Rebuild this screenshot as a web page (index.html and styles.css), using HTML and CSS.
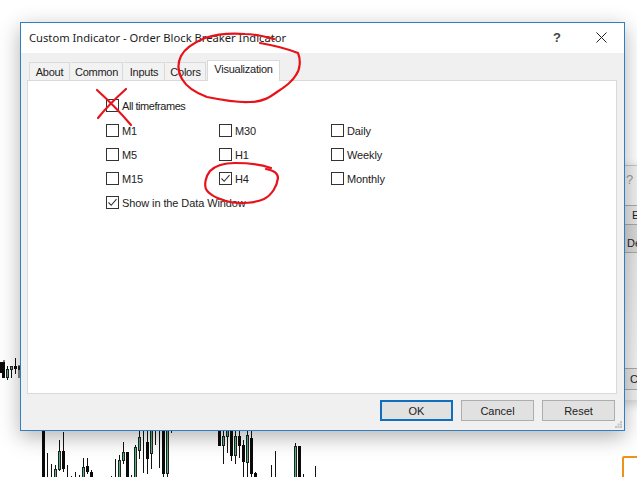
FILE: index.html
```html
<!DOCTYPE html>
<html lang="en">
<head>
<meta charset="utf-8">
<title>Custom Indicator - Order Block Breaker Indicator</title>
<link rel="stylesheet" href="styles.css">
</head>
<body>
<div class="desktop">
  <svg class="chart" width="637" height="477" viewBox="0 0 637 477">
    <g class="wick">
      <path d="M4 360V378M7.5 366V380M11.5 366V378M15.5 358V374M19 365V378"/>
      <path d="M47.5 453V477M51.5 464V477M55.5 465V477M59.5 440V471M63.5 432V472M67.5 465V477M71.500 476V477M75.5 472V477M79.5 475V477M83.5 458V477M87.5 458V474M91.5 470V477M111.5 476V477M115.5 459V477M119.5 455V477M123.5 442V464M131.5 475V477M135.5 445V477M139.5 430V459M143.5 431V473M147.5 431V474M151.5 431V469M155.5 431V445M159.5 431V468M163.5 431V477M167.5 431V477M171.5 431V433"/>
      <path d="M223.5 431V464M227.5 431V453M231.5 431V461M235.5 431V464M239.5 431V458M243.5 440V477M247.5 431V477M251.5 431V477M255.5 472V477M271.5 465V477M275.5 451V477M295.5 443V477M303.5 474V477M315.5 466V477"/>
    </g>
    <g class="bear">
      <rect x="0" y="362" width="2" height="11"/><rect x="2" y="362" width="3" height="16"/><rect x="14" y="366" width="3" height="3"/>
      <rect x="42" y="431" width="3" height="46"/><rect x="62" y="451" width="3" height="18"/><rect x="86" y="466" width="3" height="6"/><rect x="90" y="472" width="3" height="5"/><rect x="126" y="452" width="3" height="25"/><rect x="146" y="442" width="3" height="17"/><rect x="162" y="431" width="3" height="43"/>
      <rect x="218" y="431" width="3" height="15"/><rect x="230" y="431" width="3" height="25"/><rect x="238" y="436" width="3" height="10"/><rect x="242" y="445" width="3" height="17"/><rect x="250" y="438" width="3" height="36"/><rect x="254" y="473" width="3" height="4"/><rect x="298" y="446" width="3" height="31"/>
    </g>
    <g class="bull">
      <rect x="6.500" y="369.500" width="2" height="8"/><rect x="10.500" y="366.500" width="2" height="3"/><rect x="18.500" y="366.500" width="1" height="3"/>
      <rect x="54.500" y="469.500" width="2" height="8"/><rect x="58.500" y="451.500" width="2" height="18"/><rect x="82.500" y="467.500" width="2" height="10"/><rect x="118.500" y="460.500" width="2" height="17"/><rect x="122.500" y="452.500" width="2" height="8"/><rect x="134.500" y="447.500" width="2" height="30"/><rect x="138.500" y="437.500" width="2" height="13"/><rect x="150.500" y="430.500" width="2" height="23"/><rect x="166.500" y="430.500" width="2" height="43"/>
      <rect x="222.500" y="436.500" width="2" height="9"/><rect x="226.500" y="430.500" width="2" height="6"/><rect x="234.500" y="436.500" width="2" height="19"/><rect x="246.500" y="435.500" width="2" height="27"/><rect x="294.500" y="446.500" width="2" height="31"/>
    </g>
  </svg>

  <aside class="back-window">
    <div class="back-help">?</div>
    <div class="back-btn back-btn-e">E</div>
    <div class="back-btn back-btn-de">De</div>
    <div class="back-fill"></div>
    <div class="back-btn back-btn-cl">Cl</div>
  </aside>

  <div class="orange-box"></div>

  <section class="dialog">
    <header class="titlebar">
      <span class="title">Custom Indicator - Order Block Breaker Indicator</span>
      <span class="help">?</span>
      <svg class="close" width="11" height="11" viewBox="0 0 11 11"><path d="M.5.500 10.500 10.500M10.500.500.500 10.500"/></svg>
    </header>

    <nav class="tabs">
      <span class="tab tab-about">About</span>
      <span class="tab tab-common">Common</span>
      <span class="tab tab-inputs">Inputs</span>
      <span class="tab tab-colors">Colors</span>
      <span class="tab tab-active">Visualization</span>
    </nav>

    <main class="panel">
      <label class="check check-all"><span class="box"></span>All timeframes</label>
      <div class="grid">
        <label class="check"><span class="box"></span>M1</label>
        <label class="check"><span class="box"></span>M30</label>
        <label class="check"><span class="box"></span>Daily</label>
        <label class="check"><span class="box"></span>M5</label>
        <label class="check"><span class="box"></span>H1</label>
        <label class="check"><span class="box"></span>Weekly</label>
        <label class="check"><span class="box"></span>M15</label>
        <label class="check"><span class="box"><svg class="tick" width="11" height="11" viewBox="0 0 11 11"><path d="M1.500 5.500 4.200 8.300 9.500 2.200"/></svg></span>H4</label>
        <label class="check"><span class="box"></span>Monthly</label>
      </div>
      <label class="check check-data"><span class="box"><svg class="tick" width="11" height="11" viewBox="0 0 11 11"><path d="M1.500 5.500 4.200 8.300 9.500 2.200"/></svg></span>Show in the Data Window</label>
    </main>

    <footer class="footer">
      <span class="btn btn-default">OK</span>
      <span class="btn">Cancel</span>
      <span class="btn">Reset</span>
      <svg class="grip" width="7" height="7" viewBox="0 0 7 7"><path d="M5 0h2v2H5zM2.500 2.500h2v2h-2zM5 2.500h2v2H5zM0 5h2v2H0zM2.500 5h2v2h-2zM5 5h2v2H5z"/></svg>
    </footer>
  </section>

  <svg class="ink" width="637" height="477" viewBox="0 0 637 477">
    <path d="M260 43C272 45 285 48 298 53C301 60 300 70 296 75C292 82 285 87 277 92C270 97 263 102 250 102C238 103 222 100 207 97C196 93 186 86 182 79C177 70 178 62 181 56C185 48 193 43 205 38C217 34 232 33 245 34C256 34 266 37 274 39"/>
    <path d="M97 90C108 100 120 112 131 125M126 89C116 98 106 108 98 118"/>
    <path d="M271 168C262 165 248 163 235 163C224 163 215 166 210 171C206 176 204 184 206 189C209 195 218 199 230 202C241 204 255 203 264 199C272 195 277 186 278 178C278 172 272 170 266 169"/>
  </svg>
</div>
</body>
</html>
```
FILE: styles.css
```css
* { box-sizing: border-box; }
html, body { margin: 0; padding: 0; background: #fff; }
body { font-family: "Liberation Sans", Arial, sans-serif; font-size: 11px; color: #222; }

.desktop { position: relative; width: 637px; height: 477px; overflow: hidden; background: #fff; }

.chart { position: absolute; left: 0; top: 0; }
.wick path { fill: none; stroke: #111; stroke-width: 1; }
.bear rect { fill: #0a0a0a; }
.bull rect { fill: #4fb583; stroke: #222; stroke-width: 1; }

.back-window {
  position: absolute; left: 612px; top: 165px; width: 40px; height: 235px;
  display: flex; flex-direction: column; padding-left: 13px;
  background: #f0f0f0; border-top: 1px solid #c4c4c4; box-shadow: 0 3px 10px rgba(0,0,0,.2);
}
.back-help { height: 31px; flex: none; padding: 6px 0 0 1px; font-size: 13px; color: #9a9a9a; }
.back-btn { flex: none; display: flex; align-items: center; padding-left: 7px; background: #dcdcdc; border-top: 1px solid #a9a9a9; border-bottom: 1px solid #a9a9a9; }
.back-btn-e { height: 20px; margin-top: 8px; background: #e6e6e6; }
.back-btn-de { height: 28px; padding: 8px 0 0 2px; background: #d8d8d8; border-top: 0; }
.back-fill { height: 115px; flex: none; background: linear-gradient(#e6e6e6, #f3f3f3); }
.back-btn-cl { height: 22px; padding-left: 5px; background: #e4e4e4; }

.orange-box { position: absolute; left: 622px; top: 456px; width: 40px; height: 40px; border: 2px solid #f09020; border-radius: 2px; }

.dialog {
  position: absolute; left: 20px; top: 22px; width: 605px; height: 409px;
  display: flex; flex-direction: column;
  background: #f0f0f0; border: 1px solid #2f7fc4;
  box-shadow: 0 6px 20px rgba(0,0,0,.3);
}
.titlebar { height: 30px; flex: none; display: flex; align-items: center; padding: 0 17px 1px 8px; background: #fff; }
.title { flex: 1; font-family: "Noto Sans", "Liberation Sans", sans-serif; font-size: 11.200px; color: #222; }
.help { width: 43px; font-size: 13px; font-weight: 700; color: #444; }
.close path { fill: none; stroke: #222; stroke-width: 1; }

.tabs { height: 27px; flex: none; display: flex; align-items: flex-end; gap: 1px; padding-left: 8px; letter-spacing: -.25px; }
.tab { height: 18px; display: flex; align-items: center; justify-content: center; background: #f2f2f2; border: 1px solid #dadada; border-bottom: 0; border-left: 0; }
.tab-about { width: 41px; border-left: 1px solid #dadada; }
.tab-common { width: 52px; }
.tab-inputs { width: 41px; }
.tab-colors { width: 40px; }
.tab-active { width: 73px; height: 21px; margin-bottom: -1px; padding-bottom: 4px; background: #fff; border-left: 1px solid #dadada; position: relative; z-index: 1; }

.panel { flex: 1; margin: 0 7px 0 6px; padding: 18px 0 0 78px; display: flex; flex-direction: column; background: #fff; border: 1px solid #d9d9d9; }
.grid { display: grid; grid-template-columns: 113px 112px 1fr; row-gap: 11px; margin-top: 12px; }
.check { display: flex; align-items: center; height: 13px; white-space: nowrap; letter-spacing: -.1px; }
.check-all { letter-spacing: -.45px; }
.check-data { margin-top: 11px; }
.box { width: 13px; height: 13px; flex: none; margin-right: 3px; background: #fff; border: 1px solid #333; display: flex; }
.tick { display: block; }
.tick path { fill: none; stroke: #333; stroke-width: 1.100; }

.footer { flex: none; height: 36px; display: flex; gap: 8px; padding: 6px 9px 0 0; justify-content: flex-end; position: relative; }
.btn { width: 73px; height: 21px; display: flex; align-items: center; justify-content: center; background: #e1e1e1; border: 1px solid #adadad; }
.btn-default { border: 2px solid #0f6fbe; }
.grip { position: absolute; right: 2px; bottom: 2px; }
.grip path { fill: #c4c4c4; }

.ink { position: absolute; left: 0; top: 0; pointer-events: none; }
.ink path { fill: none; stroke: #e8121a; stroke-width: 2.200; stroke-linecap: round; stroke-linejoin: round; }
```
